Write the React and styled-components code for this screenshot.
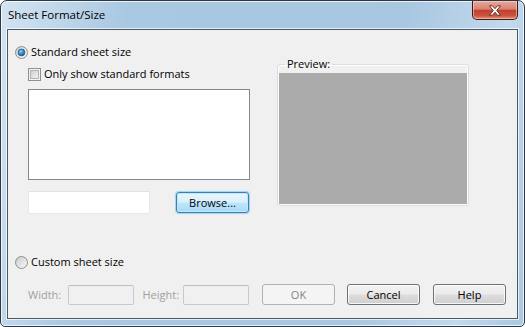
import React from "react";
import styled, { createGlobalStyle } from "styled-components";

const Global = createGlobalStyle`
  html, body {
    margin: 0;
    padding: 0;
    background: #ffffff;
  }
  body {
    font-family: "Open Sans", "Noto Sans", "DejaVu Sans", sans-serif;
    font-size: 11px;
  }
`;

const Window = styled.div`
  box-sizing: border-box;
  width: 525px;
  height: 327px;
  display: flex;
  flex-direction: column;
  padding: 0 6px 7px 6px;
  border: 1px solid #2c3845;
  border-radius: 7px 7px 5px 5px;
  background: linear-gradient(100deg, #d3e4f2 0%, #a9c8e2 22%, #a8c7e1 70%, #c3d9ec 88%, #a9c8e2 100%);
  box-shadow: inset 0 0 0 1px rgba(255, 255, 255, 0.75);
`;

const TitleBar = styled.div`
  height: 28px;
  display: flex;
  justify-content: space-between;
  align-items: flex-start;
`;

const Title = styled.div`
  padding: 6px 0 0 1px;
  font-size: 11.5px;
  line-height: 16px;
  color: #000;
`;

const CloseButton = styled.button`
  box-sizing: border-box;
  width: 46px;
  height: 19px;
  padding: 0;
  display: flex;
  align-items: center;
  justify-content: center;
  border: 1px solid #3d1a14;
  border-top: none;
  border-radius: 0 0 5px 5px;
  background: linear-gradient(#e7a99b 0%, #d98271 45%, #c2412b 52%, #c9533e 80%, #e28a6f 100%);
  box-shadow: inset 0 0 0 1px rgba(255, 220, 210, 0.55);
`;

const Client = styled.div`
  flex: 1;
  box-sizing: border-box;
  display: flex;
  flex-direction: column;
  padding: 14px 11px 0 7px;
  background: #f0f0f0;
  border: 1px solid #4b5866;
  box-shadow: 0 0 0 1px rgba(255, 255, 255, 0.7);
`;

const Top = styled.div`
  display: flex;
  gap: 28px;
`;

const LeftCol = styled.div`
  width: 234px;
  display: flex;
  flex-direction: column;
`;

const OptionRow = styled.label`
  display: flex;
  align-items: center;
  height: 16px;
  gap: 3px;
  margin-top: ${p => p.$top || 0}px;
  margin-left: ${p => p.$indent || 0}px;
  color: #000;
  line-height: 16px;
  white-space: nowrap;
`;

const ListBox = styled.div`
  box-sizing: border-box;
  width: 222px;
  height: 91px;
  margin: 7px 0 0 13px;
  background: #fff;
  border: 1px solid #828790;
`;

const FileRow = styled.div`
  display: flex;
  align-items: center;
  justify-content: space-between;
  height: 23px;
  margin: 11px 0 0 13px;
`;

const TextBox = styled.div`
  box-sizing: border-box;
  width: ${p => p.$w}px;
  height: ${p => p.$h}px;
  background: ${p => (p.$disabled ? "#f0f0f0" : "#fff")};
  border: 1px solid ${p => (p.$disabled ? "#c9c9c9" : "#e3e9ef")};
  border-top-color: ${p => (p.$disabled ? "#bdbdbd" : "#dfe3e8")};
  border-radius: ${p => (p.$disabled ? 2 : 0)}px;
`;

const Button = styled.button`
  box-sizing: border-box;
  width: 73px;
  height: 21px;
  padding: 0;
  font-family: inherit;
  font-size: 11px;
  color: ${p => (p.$disabled ? "#838383" : "#000")};
  border-radius: 3px;
  border: 1px solid ${p => (p.$disabled ? "#adb2b5" : p.$focus ? "#3c7fb1" : "#707070")};
  background: ${p =>
    p.$disabled
      ? "#f4f4f4"
      : p.$focus
      ? "linear-gradient(#eaf6fd 0%, #d9f0fc 48%, #bee6fd 52%, #a7d9f5 100%)"
      : "linear-gradient(#f2f2f2 0%, #ebebeb 48%, #dddddd 52%, #cfcfcf 100%)"};
  box-shadow: ${p =>
    p.$disabled
      ? "none"
      : p.$focus
      ? "inset 0 0 0 1px #c4e5f6, 0 0 1px 1px #9bd4f2"
      : "inset 0 0 0 1px rgba(255,255,255,0.8)"};
`;

const GroupBox = styled.fieldset`
  box-sizing: border-box;
  width: 192px;
  margin: 13px 0 0 0;
  padding: 0 1px 1px 1px;
  border: 1px solid #d5dfe5;
  border-radius: 3px;
  box-shadow: 0 0 0 1px #fff inset;
  align-self: flex-start;
`;

const Legend = styled.legend`
  margin-left: 6px;
  padding: 0 2px;
  font-size: 11px;
  line-height: 14px;
  color: #000;
`;

const PreviewArea = styled.div`
  height: 131px;
  margin-top: 2px;
  background: #ababab;
`;

const Bottom = styled.div`
  display: flex;
  align-items: center;
  height: 21px;
  margin: 14px 0 0 13px;
`;

const DimLabel = styled.span`
  width: ${p => p.$w}px;
  margin-left: ${p => p.$gap || 0}px;
  color: #a0a0a0;
`;

const Buttons = styled.div`
  display: flex;
  gap: 12px;
  margin-left: 13px;
`;

const Radio = ({ checked }) => (
  <svg width="13" height="13" viewBox="0 0 13 13">
    <defs>
      <linearGradient id={checked ? "rg1" : "rg0"} x1="0" y1="0" x2="1" y2="1">
        <stop offset="0" stopColor="#c9c9c9" />
        <stop offset="1" stopColor="#fbfbfb" />
      </linearGradient>
      <radialGradient id="rdot" cx="0.4" cy="0.35" r="0.7">
        <stop offset="0" stopColor="#8fd6fb" />
        <stop offset="0.5" stopColor="#2f8ed4" />
        <stop offset="1" stopColor="#144f86" />
      </radialGradient>
    </defs>
    <circle cx="6.5" cy="6.5" r="6" fill={`url(#${checked ? "rg1" : "rg0"})`} stroke="#8e8f8f" />
    {checked && <circle cx="6.5" cy="6.5" r="3.4" fill="url(#rdot)" stroke="#2a5e8c" strokeWidth="0.8" />}
  </svg>
);

const Checkbox = () => (
  <svg width="13" height="13" viewBox="0 0 13 13">
    <defs>
      <linearGradient id="cbg" x1="0" y1="0" x2="1" y2="1">
        <stop offset="0" stopColor="#cbcbcb" />
        <stop offset="1" stopColor="#f6f6f6" />
      </linearGradient>
    </defs>
    <rect x="0.5" y="0.5" width="12" height="12" fill="#f4f4f4" stroke="#8e8f8f" />
    <rect x="2.5" y="2.5" width="8" height="8" fill="url(#cbg)" stroke="#aeb3b9" />
  </svg>
);

const CloseGlyph = () => (
  <svg width="14" height="11" viewBox="0 0 14 11">
    <path
      d="M1.5 0.8 H4.6 L7 3.7 L9.4 0.8 H12.5 L8.8 5.5 L12.5 10.2 H9.4 L7 7.3 L4.6 10.2 H1.5 L5.2 5.5 Z"
      fill="#ffffff"
      stroke="#5a2019"
      strokeWidth="0.9"
      strokeLinejoin="round"
    />
  </svg>
);

export default function App() {
  return (
    <>
      <Global />
      <Window>
        <TitleBar>
          <Title>Sheet Format/Size</Title>
          <CloseButton aria-label="Close">
            <CloseGlyph />
          </CloseButton>
        </TitleBar>
        <Client>
          <Top>
            <LeftCol>
              <OptionRow>
                <Radio checked />
                Standard sheet size
              </OptionRow>
              <OptionRow $top={6} $indent={13}>
                <Checkbox />
                Only show standard formats
              </OptionRow>
              <ListBox />
              <FileRow>
                <TextBox $w={122} $h={23} />
                <Button $focus>Browse...</Button>
              </FileRow>
            </LeftCol>
            <GroupBox>
              <Legend>Preview:</Legend>
              <PreviewArea />
            </GroupBox>
          </Top>
          <OptionRow $top={40}>
            <Radio />
            Custom sheet size
          </OptionRow>
          <Bottom>
            <DimLabel $w={40}>Width:</DimLabel>
            <TextBox $w={66} $h={20} $disabled />
            <DimLabel $w={41} $gap={9}>Height:</DimLabel>
            <TextBox $w={66} $h={20} $disabled />
            <Buttons>
              <Button $disabled>OK</Button>
              <Button>Cancel</Button>
              <Button style={{ marginLeft: 1 }}>Help</Button>
            </Buttons>
          </Bottom>
        </Client>
      </Window>
    </>
  );
}
